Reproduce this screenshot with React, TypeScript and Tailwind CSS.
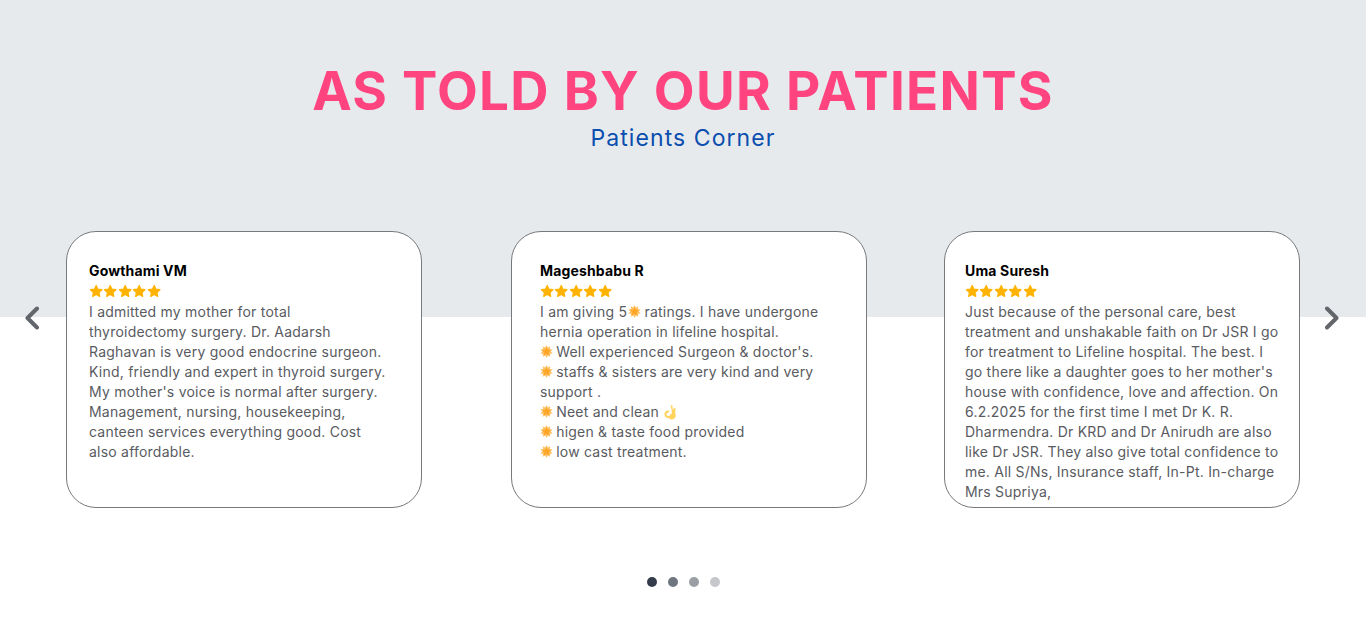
import { ReactNode } from 'react';

function Star({ size = 14.4, color = '#ffb300' }: { size?: number; color?: string }) {
  return (
    <svg width={size} height={size} viewBox="0 0 24 24" className="shrink-0">
      <path
        fill={color}
        stroke={color}
        strokeWidth="2"
        strokeLinejoin="round"
        d="M12 2.500l2.900 6.200 6.700.8-5 4.600 1.300 6.700-5.900-3.300-5.900 3.300 1.300-6.700-5-4.600 6.700-.8z"
      />
    </svg>
  );
}

// burst of rays round a fat star, stands in for the glowing star emoji
const burst = Array.from({ length: 20 }, (_, i) => {
  const r = i % 2 === 0 ? 12 : 7.6;
  const a = (i * Math.PI) / 10 - Math.PI / 2;
  return `${(12 + r * Math.cos(a)).toFixed(2)},${(12 + r * Math.sin(a)).toFixed(2)}`;
}).join(' ');

function Glow({ inline }: { inline?: boolean }) {
  return (
    <svg
      width="13"
      height="13"
      viewBox="0 0 24 24"
      className={inline ? 'ml-[-3px] mr-[-1px] inline-block align-[-1px]' : 'mr-[-1px] inline-block align-[-1px]'}
    >
      <polygon fill="#ffc266" points={burst} />
      <path fill="#ffa526" stroke="#ffa526" strokeWidth="1.500" strokeLinejoin="round" d="M12 5l2.100 4.500 4.900.6-3.600 3.300 1 4.800-4.400-2.400-4.400 2.400 1-4.800L5 10.100l4.900-.6z" />
    </svg>
  );
}

function OkHand() {
  return (
    <svg width="14" height="16" viewBox="0 0 24 28" className="inline-block align-[-3px]">
      <path fill="none" stroke="#ffd35c" strokeWidth="3.500" strokeLinecap="round" d="M9 13a5 5 0 1 0 5 6" />
      <path fill="#ffd35c" d="M13 2l3 0 1 9 2-4 3 1-1 6 1 6c0 5-4 7-7 7-3 0-5-2-5-4l5-3 0-9z" />
    </svg>
  );
}

const cards: { name: string; box: string; lines: ReactNode[] }[] = [
  {
    name: 'Gowthami VM',
    box: 'ml-[66px] pl-[22px]',
    lines: [
      'I admitted my mother for total',
      'thyroidectomy surgery. Dr. Aadarsh',
      'Raghavan is very good endocrine surgeon.',
      'Kind, friendly and expert in thyroid surgery.',
      "My mother's voice is normal after surgery.",
      'Management, nursing, housekeeping,',
      'canteen services everything good. Cost',
      'also affordable.',
    ],
  },
  {
    name: 'Mageshbabu R',
    box: 'ml-[89px] pl-[28px]',
    lines: [
      <>I am giving 5 <Glow inline /> ratings. I have undergone</>,
      'hernia operation in lifeline hospital.',
      <><Glow /> Well experienced Surgeon &amp; doctor's.</>,
      <><Glow /> staffs &amp; sisters are very kind and very</>,
      'support .',
      <><Glow /> Neet and clean <OkHand /></>,
      <><Glow /> higen &amp; taste food provided</>,
      <><Glow /> low cast treatment.</>,
    ],
  },
  {
    name: 'Uma Suresh',
    box: 'ml-[77px] pl-[20px]',
    lines: [
      'Just because of the personal care, best',
      'treatment and unshakable faith on Dr JSR I go',
      'for treatment to Lifeline hospital. The best. I',
      "go there like a daughter goes to her mother's",
      'house with confidence, love and affection. On',
      '6.2.2025 for the first time I met Dr K. R.',
      'Dharmendra. Dr KRD and Dr Anirudh are also',
      'like Dr JSR. They also give total confidence to',
      'me. All S/Ns, Insurance staff, In-Pt. In-charge',
      'Mrs Supriya,',
    ],
  },
];

function Chevron({ flip }: { flip?: boolean }) {
  return (
    <svg width="16" height="24" viewBox="0 0 16 24" className={flip ? 'rotate-180' : ''}>
      <path d="M13 2.500L3.500 12l9.500 9.500" fill="none" stroke="#63666a" strokeWidth="4" strokeLinecap="round" strokeLinejoin="round" />
    </svg>
  );
}

export default function App() {
  return (
    <div className="relative h-[617px] w-full overflow-hidden bg-[linear-gradient(#e7eaed_317px,#ffffff_317px)] font-['Inter',sans-serif]">
      {/* Heading */}
      <div className="flex flex-col items-center pt-[60px]">
        <h1 className="text-[53px] font-bold leading-[62px] tracking-[1.27px] text-[#ff4480]">AS TOLD BY OUR PATIENTS</h1>
        <p className="mt-[1px] text-[23px] leading-[30px] tracking-[1.07px] text-[#0a4eaf]">Patients Corner</p>
      </div>

      {/* Review cards */}
      <div className="mt-[78px] flex">
        {cards.map((card) => (
          <div
            key={card.name}
            className={`${card.box} h-[277px] w-[356px] shrink-0 overflow-hidden rounded-[30px] border border-[#77797c] bg-white pt-[30px]`}
          >
            <div className="text-[14px] font-bold leading-[18px] tracking-[0.15px] text-black">{card.name}</div>
            <div className="mt-[3px] flex h-[17px] items-center">
              {[0, 1, 2, 3, 4].map((i) => (
                <Star key={i} />
              ))}
            </div>
            <div className="mt-[2px] text-[14px] leading-[20px] tracking-[0.22px] text-[#595b5f]">
              {card.lines.map((line, i) => (
                <div key={i} className="whitespace-nowrap">{line}</div>
              ))}
            </div>
          </div>
        ))}
      </div>

      {/* Dots */}
      <div className="mt-[69px] flex justify-center">
        <div className="flex items-center gap-[11px]">
          <span className="h-[10px] w-[10px] rounded-full bg-[#343c4c]" />
          <span className="h-[10px] w-[10px] rounded-full bg-[#707680]" />
          <span className="h-[10px] w-[10px] rounded-full bg-[#9b9ea4]" />
          <span className="h-[10px] w-[10px] rounded-full bg-[#c5c7cb]" />
        </div>
      </div>

      {/* Arrows sit over the section */}
      <button className="absolute left-[24px] top-[306px]"><Chevron /></button>
      <button className="absolute right-[26px] top-[306px]"><Chevron flip /></button>
    </div>
  );
}
